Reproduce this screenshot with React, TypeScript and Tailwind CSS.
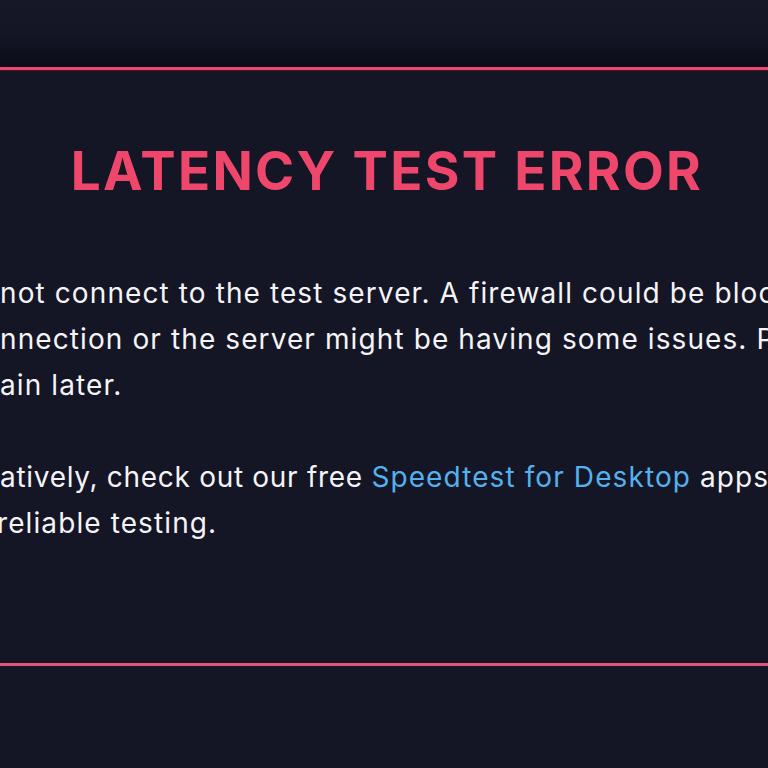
import React from "react";

const Line = ({ prefix, children }: { prefix: string; children: React.ReactNode }) => (
  <div className="flex whitespace-nowrap">
    <span className="flex w-[34px] shrink-0 justify-end whitespace-pre">{prefix}</span>
    <span className="whitespace-pre">{children}</span>
  </div>
);

export default function App() {
  return (
    <div
      className="h-[768px] w-[768px] overflow-hidden bg-[#141525] text-white"
      style={{ fontFamily: "Inter, 'DejaVu Sans', sans-serif" }}
    >
      <div className="h-[67px] bg-gradient-to-b from-[#161827] via-[#141626] to-[#0b0c18]" />
      <div className="h-[3px] bg-[#e8486f] shadow-[0_1px_2px_rgba(120,20,40,0.6)]" />
      <div className="flex h-[593px] flex-col items-center pt-[73px]">
        <h1 className="ml-[6px] text-center text-[53px] font-bold leading-[56px] tracking-[2.3px] text-[#ef476c]">
          LATENCY TEST ERROR
        </h1>
        <div className="mt-[71px] w-full -ml-[68px] text-[28px] leading-[46px] tracking-[1.1px] text-[#f4f4f6]">
          <Line prefix="We can">not connect to the test server. A firewall could be blocking your</Line>
          <Line prefix="co">nnection or the server might be having some issues. Please try</Line>
          <Line prefix="ag">ain later.</Line>
          <div className="h-[46px]" />
          <Line prefix="Altern">
            <span className="tracking-[0.7px]">atively, check out our free </span>
            <a className="text-[#55b1ed]">Speedtest for Desktop</a> apps for more
          </Line>
          <Line prefix="more ">
            <span className="-ml-[3px]">reliable testing.</span>
          </Line>
        </div>
      </div>
      <div className="h-[3px] bg-[#df5479] shadow-[0_2px_3px_rgba(60,10,20,0.8)]" />
      <div className="h-[102px] bg-[#141525]" />
    </div>
  );
}
